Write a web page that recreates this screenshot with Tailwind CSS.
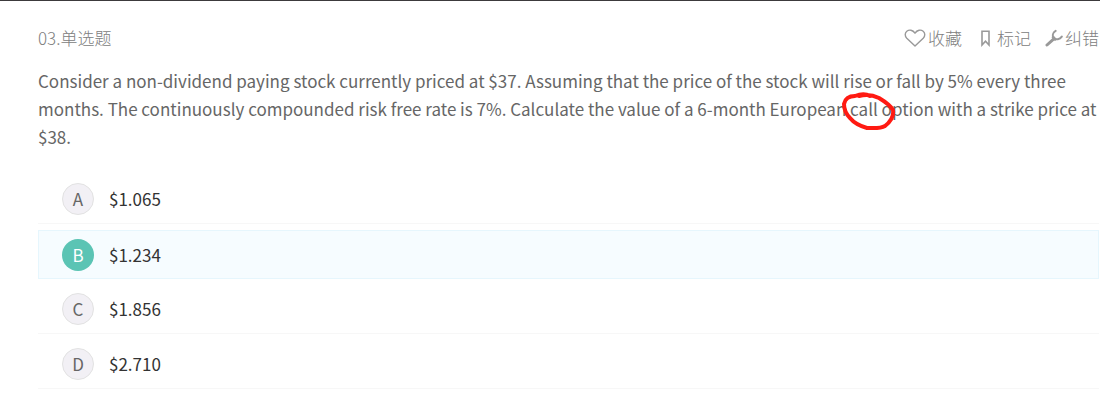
<!DOCTYPE html>
<html lang="zh-CN">
<head>
    <meta charset="UTF-8">
    <meta name="viewport" content="width=device-width, initial-scale=1.0">
    <title>单选题</title>
    <script src="https://cdn.jsdelivr.net/npm/@tailwindcss/browser@4"></script>
</head>
<body class="bg-white font-['Noto_Sans_CJK_SC',sans-serif] text-[17px] text-[#666]">
    <main class="border-t border-[#3c3a3c] pl-[38px] pr-px">
        <header class="flex items-center justify-between pt-6 text-[#808080] font-light leading-[26px]">
            <h1>03.单选题</h1>
            <div class="flex items-center gap-[14px]">
                <button type="button" class="flex items-center gap-[2px]">
                    <svg class="w-[22px] h-[18px]" viewBox="0 0 22 18" fill="none" stroke="#999" stroke-width="1.4" stroke-linejoin="round"><path d="M11 17 L2.8 9.2 C0.6 6.8 0.8 3.8 2.8 2.2 C5.2 0.4 8.8 0.8 11 4.2 C13.2 0.8 16.8 0.4 19.2 2.2 C21.2 3.8 21.4 6.8 19.2 9.2 Z"/></svg>
                    收藏
                </button>
                <button type="button" class="flex items-center gap-[6px]">
                    <svg class="w-[15px] h-[17px]" viewBox="-4 0 15 17" fill="none" stroke="#999" stroke-width="1.6"><path d="M2 1.3 H9 V15 L5.5 11.2 L2 15 Z"/></svg>
                    标记
                </button>
                <button type="button" class="flex items-center gap-[2px]">
                    <svg class="w-[18px] h-[18px]" viewBox="0 0 18 18" fill="none" stroke="#999" stroke-linecap="round"><path d="M2 16 L8 10.6" stroke-width="3"/><path d="M10.6 1.8 C7.8 3.4 7.2 6.6 8.6 9.2 C11 11.2 14.8 10.4 16.8 7.6" stroke-width="2"/><path d="M8.2 8.4 L10 10.2" stroke-width="3"/></svg>
                    纠错
                </button>
            </div>
        </header>

        <p class="mt-4 leading-[28px]">
            Consider a non-dividend paying stock currently priced at $37. Assuming that the price of the stock will rise or fall by 5% every three months. The continuously compounded risk free rate is 7%. Calculate the value of a 6-month European <span class="relative">call<svg class="absolute -left-2 -top-1 w-[54px] h-[40px]" viewBox="0 0 54 40" fill="none" stroke="#ff1a12" stroke-width="4" stroke-linecap="round" stroke-linejoin="round"><path d="M28 4 C23 1 18 2 13 4 C7 4 3 7 2 12 C2 17 4 22 8 26 C12 31 18 34 25 36 C31 36 38 37 43 34 C48 30 52 24 51 18 C48 13 42 9 37 6 C31 3 24 2 17 4"/></svg></span> option with a strike price at $38.
        </p>

        <form class="mt-6 flex flex-col gap-[6px] text-[#333]">
            <label class="flex items-center h-[49px] px-6 border-b border-[#f7f7f7]">
                <input type="radio" name="answer" value="A" class="sr-only">
                <span class="flex items-center justify-center w-8 h-8 rounded-full border border-[#e2e2e2] bg-[#f2f0f5] text-[#666]">A</span>
                <span class="ml-[15px]">$1.065</span>
            </label>
            <label class="flex items-center h-[49px] px-[23px] border border-[#e6f6fd] bg-[#f6fcff]">
                <input type="radio" name="answer" value="B" class="sr-only" checked>
                <span class="flex items-center justify-center w-8 h-8 rounded-full bg-[#5bc4b4] text-white">B</span>
                <span class="ml-[15px]">$1.234</span>
            </label>
            <label class="flex items-center h-[49px] px-6 border-b border-[#f7f7f7]">
                <input type="radio" name="answer" value="C" class="sr-only">
                <span class="flex items-center justify-center w-8 h-8 rounded-full border border-[#e2e2e2] bg-[#f2f0f5] text-[#666]">C</span>
                <span class="ml-[15px]">$1.856</span>
            </label>
            <label class="flex items-center h-[49px] px-6 border-b border-[#f7f7f7]">
                <input type="radio" name="answer" value="D" class="sr-only">
                <span class="flex items-center justify-center w-8 h-8 rounded-full border border-[#e2e2e2] bg-[#f2f0f5] text-[#666]">D</span>
                <span class="ml-[15px]">$2.710</span>
            </label>
        </form>
    </main>
</body>
</html>
